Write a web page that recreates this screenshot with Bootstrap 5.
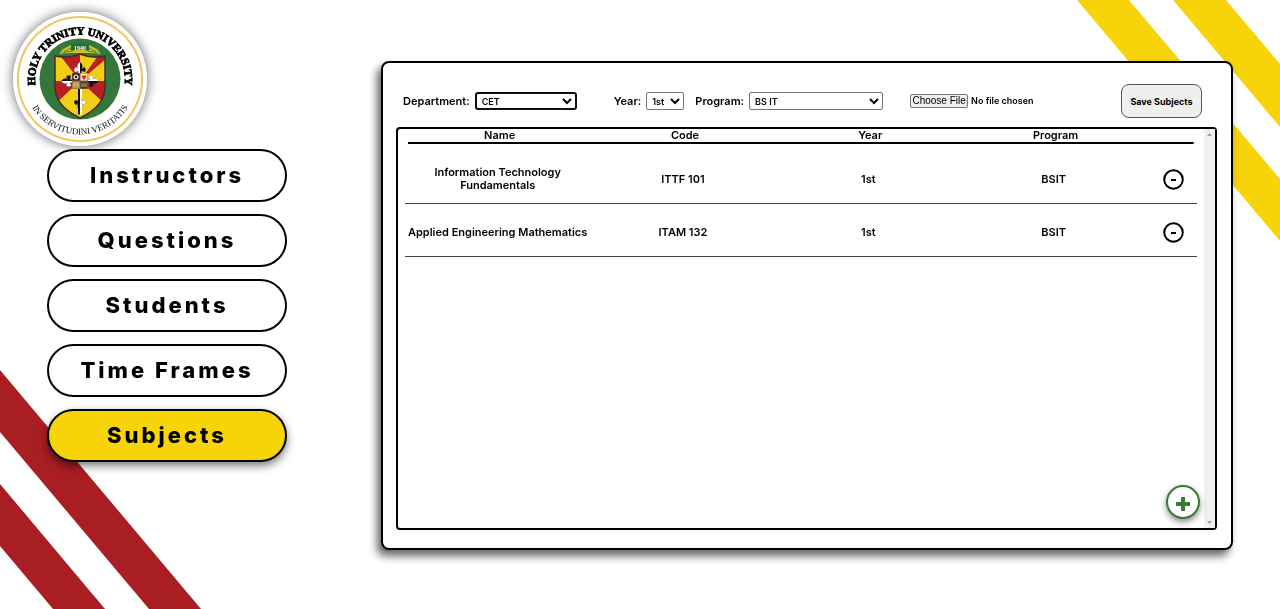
<!DOCTYPE html>
<html lang="en">
<head>
<meta charset="utf-8">
<meta name="viewport" content="width=device-width, initial-scale=1">
<title>Subjects</title>
<link href="https://cdn.jsdelivr.net/npm/bootstrap@5.3.0/dist/css/bootstrap.min.css" rel="stylesheet">
<style>
  body { font-family: Inter, sans-serif; font-weight: 600; font-size: 11px; line-height: 13px; color: #000; background: #fff; }
  .stripes { z-index: -1; }
  .side { width: 334px; padding: 12px 0 0 13px; }
  .seal { width: 134px; height: 134px; border-radius: 50%; box-shadow: 0 0 12px rgba(0,0,0,.6); }
  .side-menu { gap: 12px; margin: 3px 0 0 34px; width: 240px; }
  .pill { height: 53px; border: 2px solid #000; border-radius: 27px; background: #fff; color: #000; font-size: 22px; font-weight: 800; letter-spacing: 3px; line-height: 28px; padding: 0 0 1px; }
  .pill.current { background: #f7d30a; box-shadow: 0 4px 8px rgba(0,0,0,.5); }
  .panel { margin: 61px 47px 0 47px; min-height: calc(100vh - 120px); padding: 0 14px 18px 13px; border: 2px solid #000; border-radius: 8px; background: #fff; box-shadow: -4px 6px 8px rgba(0,0,0,.6); }
  .tools { padding: 21px 15px 9px 7px; height: 64px; }
  .tools label { margin-right: 5px; }
  .tools select { height: 18px; padding: 0 1px; border: 1px solid #767676; border-radius: 2px; background: #fff; font-size: 9px; font-weight: 600; color: #000; }
  .tools select.picked { border: 2px solid #101010; border-radius: 3px; }
  .pick-dept { width: 102px; margin-right: 37px; }
  .pick-year { width: 38px; margin-right: 11px; }
  .pick-prog { width: 134px; margin-right: 27px; }
  .file { width: 170px; font-size: 9px; font-weight: 600; }
  .file::file-selector-button { height: 14px; width: 58px; margin: 0 3px 0 0; padding: 0; border: 1px solid #767676; border-radius: 2px; background: #efefef; font: 400 10px/12px "Liberation Sans", sans-serif; }
  .save { width: 81px; height: 34px; border: 1px solid #555; border-radius: 8px; background: #efefef; font-size: 9px; font-weight: 700; padding: 0; color: #000; }
  .list-box { border: 2px solid #000; border-radius: 4px; }
  .grid-wrap { padding: 0 7px; }
  .subjects { width: 100%; table-layout: fixed; text-align: center; }
  .subjects thead tr { background: linear-gradient(#000,#000) 3px 100% / calc(100% - 6px) 2px no-repeat; }
  .subjects th { height: 15px; padding: 0 0 2px 4px; font-weight: 600; }
  .subjects tbody::before { content: ""; display: block; height: 6px; }
  .subjects td { height: 53px; padding: 6px 0 0; border-bottom: 1px solid #444; }
  .subjects td:last-child { padding-left: 3px; }
  .col-data { width: 23.4%; }
  .minus { width: 21px; height: 21px; }
  .rail { width: 11px; background: #f0f0f0; padding: 4px 0; }
  .add { right: 15px; bottom: 9px; width: 34px; height: 34px; border: 2px solid #3a7a36; border-radius: 50%; background: #fff; box-shadow: 0 3px 6px rgba(0,0,0,.45); }
</style>
</head>
<body class="min-vh-100">
<svg class="stripes position-fixed top-0 end-0" width="203" height="241" fill="#f7d30a" aria-hidden="true"><path d="M0 0h52l151 179v62zM96 0h53l54 64v63z"/></svg>
<svg class="stripes position-fixed bottom-0 start-0" width="201" height="239" fill="#a81e22" aria-hidden="true"><path d="M0 0l201 239h-52L0 62zM0 114l105 125H53L0 176z"/></svg>
<div class="d-flex align-items-start min-vh-100">
  <aside class="side flex-shrink-0">
    <svg class="seal d-block" viewBox="-67 -67 134 134" role="img" aria-label="Holy Trinity University seal">
      <defs>
        <path id="arcTop" d="M-44 10A45 45 0 1 1 44 10"/>
        <path id="arcLow" d="M-55 10A56 56 0 0 0 55 10"/>
        <clipPath id="shield"><path d="M-25-23Q-12-20 0-25Q12-20 25-23V8Q25 27 0 39Q-25 27-25 8z"/></clipPath>
        <path id="fleur" d="M-1.500-7V-10L-5-9Q-7-12-4-14L-2-12Q-4-16 0-19Q4-16 2-12L4-14Q7-12 5-9L1.500-10V-7z"/>
      </defs>
      <circle r="67" fill="#fff"/>
      <circle r="62" fill="none" stroke="#efc04a" stroke-width="2" stroke-dasharray="3 .3"/>
      <circle r="40.500" fill="#33783a"/>
      <text font-family="Liberation Serif" font-weight="700" font-size="11" stroke="#000" stroke-width=".8" text-anchor="middle"><textPath href="#arcTop" startOffset="50%">HOLY TRINITY UNIVERSITY</textPath></text>
      <text font-family="Liberation Serif" font-weight="400" font-size="9" fill="#111" text-anchor="middle"><textPath href="#arcLow" startOffset="50%">IN SERVITUDINI VERITATIS</textPath></text>
      <path d="M-21-25L-17-30L-9-34H9L17-30L21-25L9-26H-9z" fill="#d3bd2c"/>
      <path d="M-16-27L-9-31M16-27L9-31M-18-26L-8-28M18-26L8-28" stroke="#33783a" stroke-width=".8"/>
      <path d="M-9-34Q0-37 9-34V-28Q0-31-9-28z" fill="#256b34"/>
      <text y="-29" font-family="Liberation Serif" font-weight="700" font-size="6" fill="#fff" text-anchor="middle">1940</text>
      <g clip-path="url(#shield)">
        <path d="M-26-26H26V40H-26z" fill="#f2cd16"/>
        <path d="M0 2L-22-26H0z" fill="#b51f26"/>
        <path d="M0 2L26-24V2z" fill="#b51f26"/>
        <path d="M0 2L-26 2V26z" fill="#b51f26"/>
        <path d="M0 2L26 26V2z" fill="#b51f26"/>
        <path d="M0-26H20L0 2z" fill="#f2cd16"/>
        <path d="M0-26H20L0 2L26 2V-26z" fill="#b51f26"/>
        <path d="M0-26H0L0 2L26-20V2H0z" fill="#f2cd16"/>
      </g>
      <g transform="translate(0 2)">
        <use href="#fleur" fill="#fff"/><path d="M0-7V-19Q4-16 2-12L4-14Q7-12 5-9L1.500-10V-7z" fill="#111"/>
        <g transform="rotate(90)"><use href="#fleur" fill="#111"/><path d="M0-7V-19Q-4-16-2-12L-4-14Q-7-12-5-9L-1.500-10V-7z" fill="#fff"/></g>
        <g transform="rotate(-90)"><use href="#fleur" fill="#111"/><path d="M0-7V-19Q-4-16-2-12L-4-14Q-7-12-5-9L-1.500-10V-7z" fill="#fff"/></g>
        <path d="M-2 7H0V34L-2 33z" fill="#111"/><path d="M0 7H2V33L0 34z" fill="#fff"/>
        <g transform="rotate(180) translate(0 -10)"><use href="#fleur" fill="#111"/><path d="M0-7V-19Q-4-16-2-12L-4-14Q-7-12-5-9L-1.500-10V-7z" fill="#fff"/></g>
        <path d="M-8-8H8V8H-8z" fill="#7b6337"/>
        <path d="M-7.500-7.500H-.5V-.5H-7.500z" fill="#222"/><path d="M.5-7.500H7.500V-.5H.5z" fill="#f7e5dc"/>
        <path d="M-7.500 .5H-.5V7.500H-7.500z" fill="#c39542"/><path d="M.5 .5H7.500V7.500H.5z" fill="#44372c"/>
        <circle cx="-4" cy="-4" r="2" fill="none" stroke="#fff" stroke-width="1.200"/>
        <path d="M4-1L1.500-4L2.500-6L4-5L5.500-6L6.500-4z" fill="#e52c23"/>
        <path d="M-6 6V3H-2V6M2 2V6M4 2V6M6 2V6" fill="none" stroke="#e3d3a0" stroke-width=".7"/>
      </g>
      <path d="M-25-23Q-12-20 0-25Q12-20 25-23V8Q25 27 0 39Q-25 27-25 8z" fill="none" stroke="#4b2b20" stroke-width="1.500"/>
    </svg>
    <nav class="side-menu d-flex flex-column" aria-label="Sections">
      <button class="pill" type="button">Instructors</button>
      <button class="pill" type="button">Questions</button>
      <button class="pill" type="button">Students</button>
      <button class="pill" type="button">Time Frames</button>
      <button class="pill current" type="button" aria-current="page">Subjects</button>
    </nav>
  </aside>
  <main class="panel flex-grow-1 d-flex flex-column">
    <form class="tools d-flex align-items-center">
      <label for="dept">Department:</label>
      <select id="dept" class="picked pick-dept"><option>CET</option></select>
      <label for="year">Year:</label>
      <select id="year" class="pick-year"><option>1st</option></select>
      <label for="prog">Program:</label>
      <select id="prog" class="pick-prog"><option>BS IT</option></select>
      <input class="file" type="file" aria-label="Subjects file">
      <button class="save ms-auto" type="button">Save Subjects</button>
    </form>
    <section class="list-box flex-grow-1 d-flex position-relative">
      <div class="grid-wrap flex-grow-1">
        <table class="subjects">
          <colgroup><col class="col-data"><col class="col-data"><col class="col-data"><col class="col-data"><col></colgroup>
          <thead><tr><th>Name</th><th>Code</th><th>Year</th><th>Program</th><th></th></tr></thead>
          <tbody>
            <tr><td>Information Technology Fundamentals</td><td>ITTF 101</td><td>1st</td><td>BSIT</td><td><button class="minus border-0 bg-transparent p-0 align-middle" type="button" aria-label="Remove Information Technology Fundamentals"><svg class="d-block" width="21" height="21" fill="none" stroke="#000" stroke-width="2"><circle cx="10.500" cy="10.500" r="9.300"/><path d="M8 11h5"/></svg></button></td></tr>
            <tr><td>Applied Engineering Mathematics</td><td>ITAM 132</td><td>1st</td><td>BSIT</td><td><button class="minus border-0 bg-transparent p-0 align-middle" type="button" aria-label="Remove Applied Engineering Mathematics"><svg class="d-block" width="21" height="21" fill="none" stroke="#000" stroke-width="2"><circle cx="10.500" cy="10.500" r="9.300"/><path d="M8 11h5"/></svg></button></td></tr>
          </tbody>
        </table>
      </div>
      <div class="rail flex-shrink-0 d-flex flex-column justify-content-between align-items-center" aria-hidden="true">
        <svg class="d-block" width="5" height="3" fill="#a0a0a0"><path d="M0 3L2.500 0L5 3z"/></svg>
        <svg class="d-block" width="5" height="3" fill="#a0a0a0"><path d="M0 0L2.500 3L5 0z"/></svg>
      </div>
      <button class="add position-absolute d-flex align-items-center justify-content-center p-0" type="button" aria-label="Add subject"><svg class="mt-1" width="14" height="14" fill="#3a7a36"><path d="M5 0h4v5h5v4H9v5H5V9H0V5h5z"/></svg></button>
    </section>
  </main>
</div>
<script src="https://cdn.jsdelivr.net/npm/bootstrap@5.3.0/dist/js/bootstrap.bundle.min.js"></script>
</body>
</html>
